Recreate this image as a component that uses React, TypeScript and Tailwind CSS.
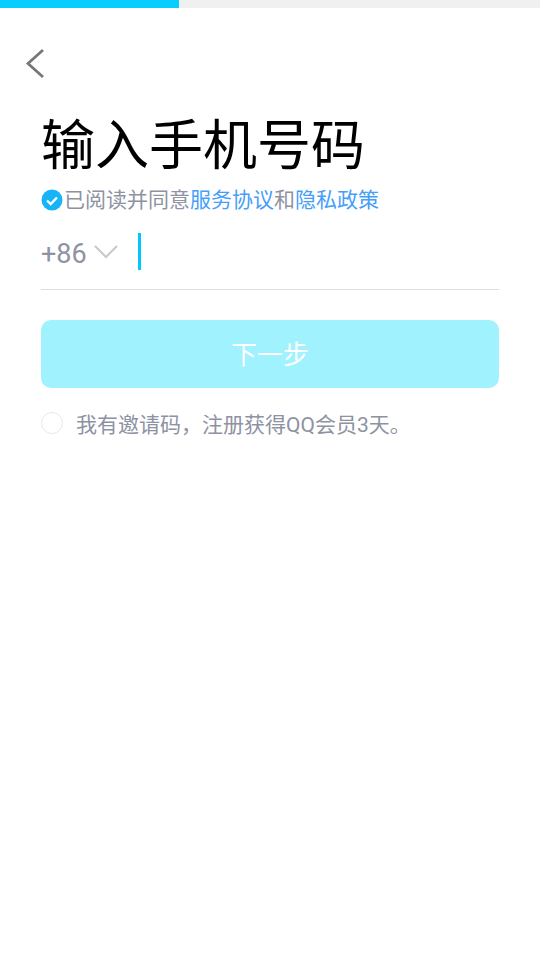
export default function App() {
  const font = { fontFamily: 'Roboto, "Noto Sans CJK SC", sans-serif' };
  return (
    <div className="w-[540px] h-[960px] bg-white overflow-hidden flex flex-col" style={font}>
      <div className="h-2 w-full bg-[#f0f0f0] flex shrink-0">
        <div className="h-2 w-[179px] bg-[#09cdff]" />
      </div>
      <div className="pl-[24px] pt-[40px] h-[32px] box-content shrink-0">
        <svg width="22" height="32" viewBox="0 0 22 32" fill="none">
          <path d="M19 2 L4 15.5 L19 29" stroke="#777777" strokeWidth="2.8" />
        </svg>
      </div>
      <div className="px-[41px] flex flex-col">
        <h1 className="mt-[31px] h-[72px] text-[54px] leading-[72px] text-black font-normal whitespace-nowrap">输入手机号码</h1>
        <div className="mt-[2px] h-[30px] flex items-center text-[21px] leading-[30px] text-[#8e92a3] whitespace-nowrap">
          <svg className="shrink-0 mr-[1px]" width="22" height="22" viewBox="0 0 22 22">
            <circle cx="11" cy="11" r="10.5" fill="#18b4f8" />
            <path d="M6 11.5 L9.7 15 L16 8.5" fill="none" stroke="#ffffff" strokeWidth="2.4" />
          </svg>
          <span>已阅读并同意</span>
          <span className="text-[#459ef8]">服务协议</span>
          <span>和</span>
          <span className="text-[#459ef8]">隐私政策</span>
        </div>
        <div className="mt-[17px] h-[58px] border-b border-[#dedfe2] flex items-start">
          <span className="mt-[2px] text-[27px] leading-[40px] text-[#8e92a3]">+86</span>
          <svg className="ml-[6px] mt-[12px]" width="26" height="16" viewBox="0 0 26 16" fill="none">
            <path d="M2 2 L13 13 L24 2" stroke="#c8c9c6" strokeWidth="2" />
          </svg>
          <div className="ml-[19px] mt-[1px] w-[3px] h-[37px] bg-[#00c8ff]" />
        </div>
        <button className="mt-[30px] pt-[2px] h-[68px] w-full rounded-[10px] bg-[#a0f2ff] text-white text-[26px] flex items-center justify-center">下一步</button>
        <div className="mt-[23px] flex items-center h-[30px] text-[21px] text-[#8e92a3] whitespace-nowrap">
          <div className="w-[22px] h-[22px] rounded-full border-[1.5px] border-[#e8e8e8] mr-[13px] -mt-[6px] shrink-0" />
          <span>我有邀请码，注册获得QQ会员3天。</span>
        </div>
      </div>
    </div>
  );
}
